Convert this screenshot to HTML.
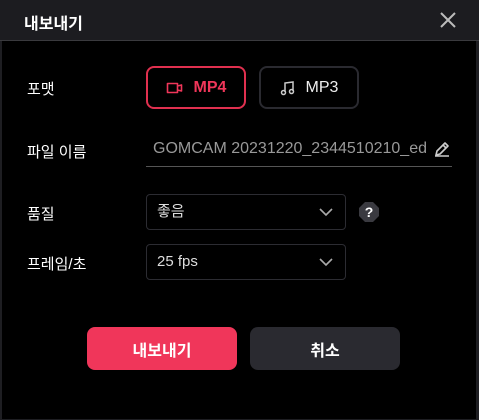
<!DOCTYPE html>
<html><head><meta charset="utf-8"><style>
*{margin:0;padding:0;box-sizing:border-box}
body{width:479px;height:420px;background:#000;font-family:"Liberation Sans","Noto Sans CJK KR",sans-serif;color:#fff;position:relative;overflow:hidden}
.frame{position:absolute;inset:0;border-left:2px solid #1e1e22;border-right:3px solid #1e1e22;border-bottom:1px solid #1e1e22}
.hdr{position:absolute;left:0;top:0;width:479px;height:41px;background:#1c1c20;border-bottom:1px solid #3a3a3e}
.hdr .t{position:absolute;left:24px;top:10px;font-size:16px;font-weight:bold}
.lbl{position:absolute;left:27px;font-size:15px}
.btn{position:absolute;border-radius:8px;font-size:16px;display:flex;align-items:center;justify-content:center}
.sel{position:absolute;left:146px;width:200px;height:36px;border:1px solid #2c2c32;border-radius:4px;font-size:15px;padding-left:10px;line-height:34px;color:#ddd}
.chev{position:absolute;right:12px;top:13px}
</style></head><body>
<div class="frame"></div>
<div class="hdr"><div class="t">내보내기</div>
<svg style="position:absolute;left:439px;top:11px" width="18" height="18" viewBox="0 0 18 18"><path d="M2 2L16 16M16 2L2 16" stroke="#bbb" stroke-width="2"/></svg></div>
<div class="lbl" style="top:78px">포맷</div>
<div class="btn" style="left:146px;top:66px;width:100px;height:43px;border:2px solid #e0304f;color:#f0365a;font-weight:bold">
<svg width="18" height="14" viewBox="0 0 18 14" style="margin-right:10px"><path d="M1.5 2.5h10v9h-10zM11.5 5l4 -1v6l-4 -1" fill="none" stroke="#f0365a" stroke-width="1.6" stroke-linejoin="round"/></svg>MP4</div>
<div class="btn" style="left:259px;top:66px;width:100px;height:43px;border:2px solid #2a2a30;color:#eee">
<svg width="16" height="16" viewBox="0 0 16 16" style="margin-right:10px"><path d="M5 12V3l8-1v9" fill="none" stroke="#ccc" stroke-width="1.5"/><circle cx="3.5" cy="12.5" r="2" fill="none" stroke="#ccc" stroke-width="1.5"/><circle cx="11.5" cy="11.5" r="2" fill="none" stroke="#ccc" stroke-width="1.5"/></svg>MP3</div>
<div class="lbl" style="top:141px">파일 이름</div>
<div style="position:absolute;left:153px;top:140px;font-size:16px;color:#999">GOMCAM 20231220_2344510210_ed</div>
<svg style="position:absolute;left:433px;top:140px" width="18" height="18" viewBox="0 0 18 18"><path d="M3 15l1-4 8-8 3 3-8 8zM10 5l3 3M2 16h14" fill="none" stroke="#ccc" stroke-width="1.6" stroke-linejoin="round"/></svg>
<div style="position:absolute;left:146px;top:166px;width:306px;height:1px;background:#555"></div>
<div class="lbl" style="top:203px">품질</div>
<div class="sel" style="top:194px">좋음<svg class="chev" width="14" height="9" viewBox="0 0 14 9"><path d="M1 1l6 6 6-6" fill="none" stroke="#aaa" stroke-width="1.6"/></svg></div>
<svg style="position:absolute;left:359px;top:202px" width="20" height="20" viewBox="0 0 20 20"><path d="M6 0h8l6 6v8l-6 6H6l-6-6V6z" fill="#3a3a40"/><text x="10" y="15" text-anchor="middle" font-size="14" font-weight="bold" fill="#fff" font-family="Liberation Sans">?</text></svg>
<div class="lbl" style="top:253px">프레임/초</div>
<div class="sel" style="top:244px">25 fps<svg class="chev" width="14" height="9" viewBox="0 0 14 9"><path d="M1 1l6 6 6-6" fill="none" stroke="#aaa" stroke-width="1.6"/></svg></div>
<div class="btn" style="left:87px;top:327px;width:150px;height:43px;background:#f0365a;font-weight:bold">내보내기</div>
<div class="btn" style="left:250px;top:327px;width:150px;height:43px;background:#2a2a30;font-weight:bold">취소</div>
</body></html>
